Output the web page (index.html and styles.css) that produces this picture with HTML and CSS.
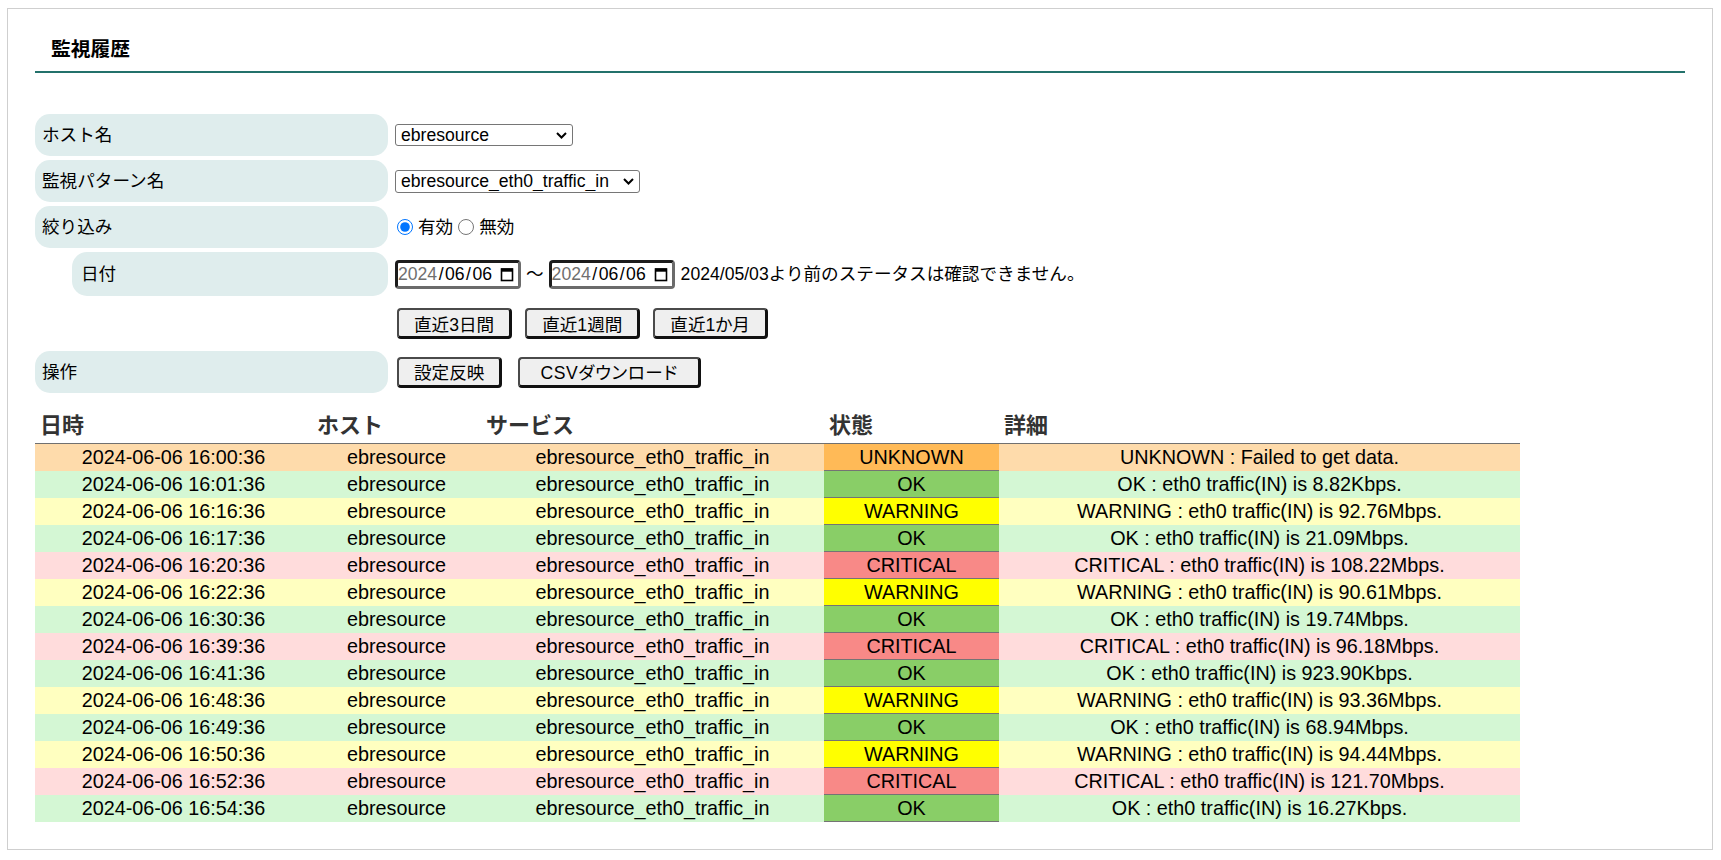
FILE: index.html
```html
<!DOCTYPE html>
<html lang="ja">
<head>
<meta charset="utf-8">
<title>監視履歴</title>
<link rel="stylesheet" href="styles.css">
</head>
<body>
<div class="panel">
  <h1 class="title">監視履歴</h1>

  <div class="form">
    <div class="frow">
      <div class="label">ホスト名</div>
      <div class="field">
        <div class="select-wrap sel-host">
          <select class="select"><option>ebresource</option></select>
          <svg class="chev" width="11" height="7" viewBox="0 0 11 7"><polyline points="1,1 5.5,5.5 10,1" fill="none" stroke="#000" stroke-width="2"/></svg>
        </div>
      </div>
    </div>

    <div class="frow">
      <div class="label">監視パターン名</div>
      <div class="field">
        <div class="select-wrap sel-pattern">
          <select class="select"><option>ebresource_eth0_traffic_in</option></select>
          <svg class="chev" width="11" height="7" viewBox="0 0 11 7"><polyline points="1,1 5.5,5.5 10,1" fill="none" stroke="#000" stroke-width="2"/></svg>
        </div>
      </div>
    </div>

    <div class="frow">
      <div class="label">絞り込み</div>
      <div class="field">
        <label class="radio"><input type="radio" name="filter" checked>有効</label>
        <label class="radio"><input type="radio" name="filter">無効</label>
      </div>
    </div>

    <div class="frow tall">
      <div class="label sub">日付</div>
      <div class="field">
        <div class="date"><span class="yr">2024</span><span class="sep">/</span>06<span class="sep">/</span>06
          <svg class="cal" width="14" height="15" viewBox="0 0 14 15"><rect x="1.5" y="2" width="11" height="11.5" fill="none" stroke="#000" stroke-width="1.6"/><rect x="1" y="1.5" width="12" height="3.2" fill="#000"/></svg>
        </div>
        <span class="tilde">〜</span>
        <div class="date"><span class="yr">2024</span><span class="sep">/</span>06<span class="sep">/</span>06
          <svg class="cal" width="14" height="15" viewBox="0 0 14 15"><rect x="1.5" y="2" width="11" height="11.5" fill="none" stroke="#000" stroke-width="1.6"/><rect x="1" y="1.5" width="12" height="3.2" fill="#000"/></svg>
        </div>
        <span class="note">2024/05/03より前のステータスは確認できません。</span>
      </div>
    </div>

    <div class="frow btnrow">
      <div class="label blank"></div>
      <div class="field btns gap13">
        <button class="btn">直近3日間</button>
        <button class="btn">直近1週間</button>
        <button class="btn">直近1か月</button>
      </div>
    </div>

    <div class="frow">
      <div class="label">操作</div>
      <div class="field btns gap16">
        <button class="btn">設定反映</button>
        <button class="btn btn-csv">CSVダウンロード</button>
      </div>
    </div>
  </div>

  <table class="history">
    <colgroup>
      <col class="c-date"><col class="c-host"><col class="c-svc"><col class="c-st"><col class="c-detail">
    </colgroup>
    <thead>
      <tr><th>日時</th><th>ホスト</th><th>サービス</th><th>状態</th><th>詳細</th></tr>
    </thead>
    <tbody>
      <tr class="unknown"><td>2024-06-06 16:00:36</td><td>ebresource</td><td>ebresource_eth0_traffic_in</td><td class="st">UNKNOWN</td><td>UNKNOWN : Failed to get data.</td></tr>
      <tr class="ok"><td>2024-06-06 16:01:36</td><td>ebresource</td><td>ebresource_eth0_traffic_in</td><td class="st">OK</td><td>OK : eth0 traffic(IN) is 8.82Kbps.</td></tr>
      <tr class="warning"><td>2024-06-06 16:16:36</td><td>ebresource</td><td>ebresource_eth0_traffic_in</td><td class="st">WARNING</td><td>WARNING : eth0 traffic(IN) is 92.76Mbps.</td></tr>
      <tr class="ok"><td>2024-06-06 16:17:36</td><td>ebresource</td><td>ebresource_eth0_traffic_in</td><td class="st">OK</td><td>OK : eth0 traffic(IN) is 21.09Mbps.</td></tr>
      <tr class="critical"><td>2024-06-06 16:20:36</td><td>ebresource</td><td>ebresource_eth0_traffic_in</td><td class="st">CRITICAL</td><td>CRITICAL : eth0 traffic(IN) is 108.22Mbps.</td></tr>
      <tr class="warning"><td>2024-06-06 16:22:36</td><td>ebresource</td><td>ebresource_eth0_traffic_in</td><td class="st">WARNING</td><td>WARNING : eth0 traffic(IN) is 90.61Mbps.</td></tr>
      <tr class="ok"><td>2024-06-06 16:30:36</td><td>ebresource</td><td>ebresource_eth0_traffic_in</td><td class="st">OK</td><td>OK : eth0 traffic(IN) is 19.74Mbps.</td></tr>
      <tr class="critical"><td>2024-06-06 16:39:36</td><td>ebresource</td><td>ebresource_eth0_traffic_in</td><td class="st">CRITICAL</td><td>CRITICAL : eth0 traffic(IN) is 96.18Mbps.</td></tr>
      <tr class="ok"><td>2024-06-06 16:41:36</td><td>ebresource</td><td>ebresource_eth0_traffic_in</td><td class="st">OK</td><td>OK : eth0 traffic(IN) is 923.90Kbps.</td></tr>
      <tr class="warning"><td>2024-06-06 16:48:36</td><td>ebresource</td><td>ebresource_eth0_traffic_in</td><td class="st">WARNING</td><td>WARNING : eth0 traffic(IN) is 93.36Mbps.</td></tr>
      <tr class="ok"><td>2024-06-06 16:49:36</td><td>ebresource</td><td>ebresource_eth0_traffic_in</td><td class="st">OK</td><td>OK : eth0 traffic(IN) is 68.94Mbps.</td></tr>
      <tr class="warning"><td>2024-06-06 16:50:36</td><td>ebresource</td><td>ebresource_eth0_traffic_in</td><td class="st">WARNING</td><td>WARNING : eth0 traffic(IN) is 94.44Mbps.</td></tr>
      <tr class="critical"><td>2024-06-06 16:52:36</td><td>ebresource</td><td>ebresource_eth0_traffic_in</td><td class="st">CRITICAL</td><td>CRITICAL : eth0 traffic(IN) is 121.70Mbps.</td></tr>
      <tr class="ok"><td>2024-06-06 16:54:36</td><td>ebresource</td><td>ebresource_eth0_traffic_in</td><td class="st">OK</td><td>OK : eth0 traffic(IN) is 16.27Kbps.</td></tr>
    </tbody>
  </table>
</div>
</body>
</html>
```

FILE: styles.css
```css
* { box-sizing: border-box; }

body {
  margin: 0;
  font-family: "Liberation Sans", "Noto Sans CJK JP", sans-serif;
  color: #000;
  background: #fff;
}

.panel {
  margin: 8px 8px 8px 7px;
  border: 1px solid #cfcfcf;
  padding: 0 27px 27px;
}

.title {
  margin: 0;
  padding: 26px 0 8px 16px;
  font-size: 19.8px;
  line-height: 28px;
  font-weight: bold;
  border-bottom: 2px solid #23716b;
}

.form {
  margin-top: 41px;
  display: flex;
  flex-direction: column;
  gap: 4px;
}

.frow {
  display: flex;
  align-items: center;
  gap: 7px;
  height: 42px;
}
.frow.tall { height: 44px; }
.frow.btnrow { height: 47px; }

.label {
  width: 353px;
  align-self: stretch;
  flex-shrink: 0;
  background: #dfeded;
  border-radius: 15px;
  padding: 0 0 4px 7px;
  display: flex;
  align-items: center;
  font-size: 17.6px;
}
.label.sub {
  width: 316px;
  margin-left: 37px;
  padding-left: 9px;
}
.label.blank { background: none; }

.field {
  display: flex;
  align-items: center;
  font-size: 17.6px;
  line-height: 22px;
}

.select-wrap {
  position: relative;
  height: 22px;
}
.sel-host { width: 178px; }
.sel-pattern { width: 245px; height: 23px; }

.select {
  appearance: none;
  -webkit-appearance: none;
  width: 100%;
  height: 100%;
  border: 1px solid #767676;
  border-radius: 3px;
  background: #fff;
  color: #000;
  font-family: "Liberation Sans", sans-serif;
  font-size: 17.6px;
  padding: 0 0 1px 5px;
  margin: 0;
}

.chev {
  position: absolute;
  right: 6px;
  top: 8px;
  pointer-events: none;
}

.radio {
  display: inline-flex;
  align-items: center;
  margin-right: 3px;
}
.radio input {
  width: 16px;
  height: 16px;
  margin: 0 5px 0 2px;
}

.date {
  display: inline-flex;
  align-items: center;
  width: 126px;
  height: 29px;
  border: 3px solid;
  border-color: #1c1c1c #6b6b6b #6b6b6b #1c1c1c;
  border-radius: 4px;
  padding-left: 0;
  font-size: 17.6px;
  background: #fff;
}
.date .yr { color: #6f6f6f; }
.date .sep { margin: 0 1.5px; }
.date .cal { margin-left: auto; margin-right: 4px; }

.tilde { margin: 0 5px; }
.note { margin-left: 6px; }

.btns { display: flex; align-items: center; padding-left: 2px; }
.gap13 { gap: 13px; }
.gap16 { gap: 16px; }

.btn {
  height: 31px;
  padding: 0 15px;
  background: #efefef;
  border-style: solid;
  border-width: 2px 3px 3px 2px;
  border-color: #4a4a4a #111 #111 #4a4a4a;
  border-radius: 4px;
  font-family: "Liberation Sans", "Noto Sans CJK JP", sans-serif;
  font-size: 17.6px;
  font-feature-settings: "palt";
  color: #000;
  margin: 0;
}
.btn-csv { padding: 0 20px; letter-spacing: 0.6px; }

.history {
  margin-top: 20px;
  width: 1485px;
  table-layout: fixed;
  border-collapse: separate;
  border-spacing: 0;
}
.c-date { width: 277px; }
.c-host { width: 169px; }
.c-svc { width: 343px; }
.c-st { width: 175px; }
.c-detail { width: 521px; }

.history th {
  font-size: 22px;
  font-weight: bold;
  color: #333;
  text-align: left;
  padding: 0 5px 4px;
  line-height: 26px;
  border-bottom: 1px solid #707070;
}

.history td {
  font-size: 19.8px;
  line-height: 27px;
  height: 27px;
  padding: 0;
  text-align: center;
  white-space: nowrap;
  vertical-align: middle;
}

.history td.st { box-shadow: inset 0 -1px 0 #747474; }

tr.unknown td { background: #fedbab; }
tr.unknown td.st { background: #ffba57; }
tr.ok td { background: #d4f7d4; }
tr.ok td.st { background: #89ce67; }
tr.warning td { background: #ffffc0; }
tr.warning td.st { background: #ffff00; }
tr.critical td { background: #ffdcdc; }
tr.critical td.st { background: #f88987; }
```
